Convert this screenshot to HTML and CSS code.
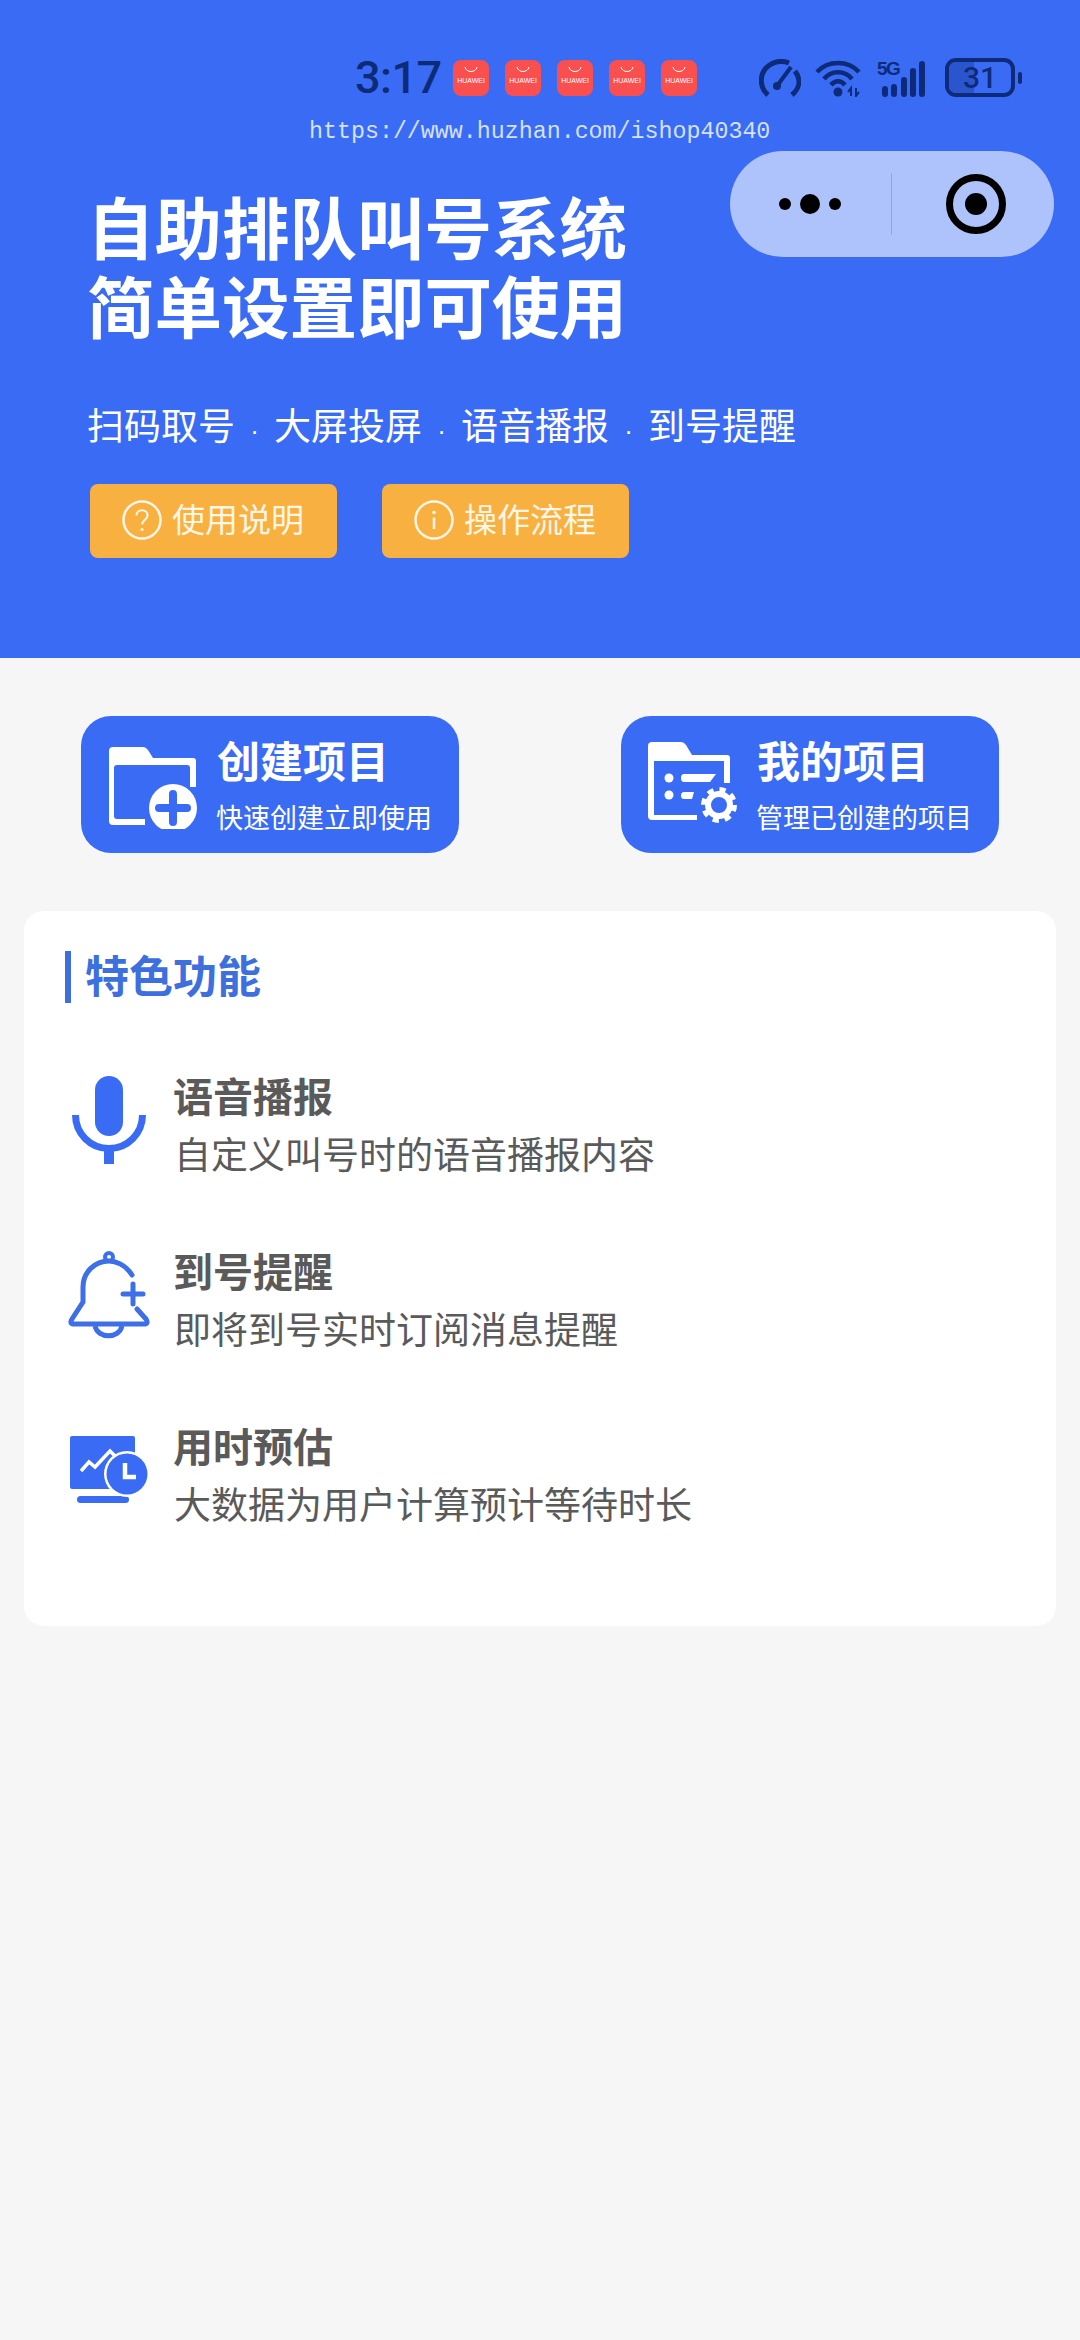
FILE: index.html
```html
<!DOCTYPE html>
<html lang="zh-CN">
<head>
  <meta charset="UTF-8" />
  <meta name="viewport" content="width=device-width, initial-scale=1.0"/>
  <title>自助排队叫号系统</title>
  <link rel="stylesheet" href="styles.css">
</head>
<body>

    <div class="hero">
        <div class="status">
            <span class="time">3:17</span>
            <div class="tiles">
                <div class="tile"><svg width="14" height="7" viewBox="0 0 14 7"><path d="M1 1c1 6 11 6 12 0" fill="none" stroke="#fff" stroke-width="1"/></svg><span>HUAWEI</span></div>
                <div class="tile"><svg width="14" height="7" viewBox="0 0 14 7"><path d="M1 1c1 6 11 6 12 0" fill="none" stroke="#fff" stroke-width="1"/></svg><span>HUAWEI</span></div>
                <div class="tile"><svg width="14" height="7" viewBox="0 0 14 7"><path d="M1 1c1 6 11 6 12 0" fill="none" stroke="#fff" stroke-width="1"/></svg><span>HUAWEI</span></div>
                <div class="tile"><svg width="14" height="7" viewBox="0 0 14 7"><path d="M1 1c1 6 11 6 12 0" fill="none" stroke="#fff" stroke-width="1"/></svg><span>HUAWEI</span></div>
                <div class="tile"><svg width="14" height="7" viewBox="0 0 14 7"><path d="M1 1c1 6 11 6 12 0" fill="none" stroke="#fff" stroke-width="1"/></svg><span>HUAWEI</span></div>
            </div>
            <div class="sys">
                <svg class="gauge" width="42" height="38" viewBox="0 0 42 38">
                    <path d="M9 36C1 29 0 17 7 9 14 2 23 1 30 4" fill="none" stroke="#0d2b78" stroke-width="5"/>
                    <path d="M36 12C42 20 41 29 33 36" fill="none" stroke="#0d2b78" stroke-width="5"/>
                    <path d="M18 27L32 8" fill="none" stroke="#0d2b78" stroke-width="4"/>
                    <circle cx="18" cy="27" r="4" fill="#0d2b78"/>
                </svg>
                <svg class="wifi" width="48" height="38" viewBox="0 0 48 38">
                    <path d="M2 13C13 1 33 1 44 13" fill="none" stroke="#0d2b78" stroke-width="4.5"/>
                    <path d="M9 20C16 11 30 11 37 20" fill="none" stroke="#0d2b78" stroke-width="4.5"/>
                    <path d="M16 26C20 21 26 21 30 26" fill="none" stroke="#0d2b78" stroke-width="4.5"/>
                    <circle cx="23" cy="33" r="4.5" fill="#0d2b78"/>
                    <path d="M36 37V29l-3 4M41 29v8l3-4" fill="none" stroke="#0d2b78" stroke-width="2"/>
                </svg>
                <div class="signal">
                    <span class="five-g">5G</span>
                    <svg width="44" height="37" viewBox="0 0 44 37">
                        <rect x="1" y="26" width="6" height="11" rx="3" fill="#0d2b78"/>
                        <rect x="10" y="24" width="6" height="13" rx="3" fill="#0d2b78"/>
                        <rect x="20" y="17" width="6" height="20" rx="3" fill="#0d2b78"/>
                        <rect x="29" y="8" width="6" height="29" rx="3" fill="#0d2b78"/>
                        <rect x="38" y="1" width="6" height="36" rx="3" fill="#0d2b78"/>
                    </svg>
                </div>
                <div class="battery"><div class="battery-body"><span class="battery-fill"></span><span class="battery-num">31</span></div><span class="battery-nub"></span></div>
            </div>
        </div>

        <div class="watermark">https://www.huzhan.com/ishop40340</div>

        <div class="capsule">
            <div class="capsule-more"><i class="dot"></i><i class="dot dot-big"></i><i class="dot"></i></div>
            <div class="capsule-line"></div>
            <svg class="capsule-target" width="62" height="62" viewBox="0 0 62 62">
                <circle cx="31" cy="31" r="26.5" fill="none" stroke="#000" stroke-width="7"/>
                <circle cx="31" cy="31" r="11" fill="#000"/>
            </svg>
        </div>

        <h1>自助排队叫号系统<br>简单设置即可使用</h1>
        <p class="tags">扫码取号<span class="sep">·</span>大屏投屏<span class="sep">·</span>语音播报<span class="sep">·</span>到号提醒</p>
        <div class="links">
            <a class="link-btn">
                <svg width="40" height="40" viewBox="0 0 40 40">
                    <circle cx="20" cy="20" r="18.5" fill="none" stroke="#fff6e6" stroke-width="2.5"/>
                    <path d="M14.5 15.5c0-7 11-7 11 0 0 4.500-5.500 4.500-5.500 9" fill="none" stroke="#fff6e6" stroke-width="2.200"/>
                    <circle cx="20" cy="29.500" r="1.600" fill="#fff6e6"/>
                </svg>
                <span class="link-text">使用说明</span>
            </a>
            <a class="link-btn">
                <svg width="40" height="40" viewBox="0 0 40 40">
                    <circle cx="20" cy="20" r="18.5" fill="none" stroke="#fff6e6" stroke-width="2.5"/>
                    <circle cx="20" cy="12.500" r="1.800" fill="#fff6e6"/>
                    <path d="M20 17.500V29" fill="none" stroke="#fff6e6" stroke-width="2.500"/>
                </svg>
                <span class="link-text">操作流程</span>
            </a>
        </div>
    </div>

    <div class="actions">
        <a class="action">
            <svg class="action-icon" width="88" height="82" viewBox="0 0 88 82">
                <path fill="#fff" fill-rule="evenodd" d="M4 0H34Q37 0 39 3L44 11H84Q87 11 87 14V78H4Q0 78 0 74V4Q0 0 4 0ZM8 18Q5 18 5 21V69Q5 72 8 72H81V21Q81 18 78 18Z"/>
                <rect x="36" y="36" width="52" height="46" fill="#396bf5"/>
                <path d="M81 18V40H87V14Z" fill="#fff"/>
                <circle cx="64" cy="61" r="24" fill="#fff"/>
                <path d="M64 47V75M50 61H78" fill="none" stroke="#396bf5" stroke-width="8" stroke-linecap="round"/>
            </svg>
            <div>
                <div class="action-title">创建项目</div>
                <div class="action-sub">快速创建立即使用</div>
            </div>
        </a>
        <a class="action">
            <svg class="action-icon action-icon-2" width="89" height="83" viewBox="0 0 89 83">
                <path fill="#fff" d="M4 0H33Q36 0 38 3L44 13H79Q82 13 82 16V41H76V19H6V73H49V78H4Q0 78 0 74V4Q0 0 4 0Z"/>
                <circle cx="21" cy="36" r="4.500" fill="#fff"/>
                <circle cx="21" cy="53" r="4.500" fill="#fff"/>
                <path d="M36 32H68L62 40H36Q33 40 33 36T36 32ZM36 50H46L44 57H36Q33 57 33 53.500T36 50Z" fill="#fff"/>
                <circle cx="71" cy="63" r="11" fill="none" stroke="#fff" stroke-width="6"/>
                <circle cx="71" cy="63" r="15" fill="none" stroke="#fff" stroke-width="6" stroke-dasharray="6 5.780"/>
            </svg>
            <div>
                <div class="action-title">我的项目</div>
                <div class="action-sub">管理已创建的项目</div>
            </div>
        </a>
    </div>

    <div class="panel">
        <h2 class="panel-title">特色功能</h2>

        <div class="feature">
            <div class="feature-icon">
                <svg class="icon-mic" width="74" height="88" viewBox="0 0 74 88">
                    <rect x="23" y="0" width="28" height="60" rx="14" fill="#396bf5"/>
                    <path d="M3.500 39A33.500 33.500 0 0 0 70.500 39" fill="none" stroke="#396bf5" stroke-width="7"/>
                    <rect x="32" y="74" width="10" height="14" fill="#396bf5"/>
                </svg>
            </div>
            <div>
                <div class="feature-title">语音播报</div>
                <div class="feature-desc">自定义叫号时的语音播报内容</div>
            </div>
        </div>

        <div class="feature">
            <div class="feature-icon">
                <svg class="icon-bell" width="82" height="88" viewBox="0 0 82 88">
                    <circle cx="41" cy="6" r="4" fill="none" stroke="#3d6fe8" stroke-width="4"/>
                    <path d="M64 24C57 13 47 10 41 10 27 10 15 21 15 36V51L4 68Q1 73 6 73H76Q81 73 78 68L69 58" fill="none" stroke="#3d6fe8" stroke-width="5" stroke-linecap="round"/>
                    <path d="M27 75C30 88 51 88 54 75" fill="none" stroke="#3d6fe8" stroke-width="5"/>
                    <path d="M65 33V53M55 43H75" fill="none" stroke="#3d6fe8" stroke-width="5" stroke-linecap="round"/>
                </svg>
            </div>
            <div>
                <div class="feature-title">到号提醒</div>
                <div class="feature-desc">即将到号实时订阅消息提醒</div>
            </div>
        </div>

        <div class="feature">
            <div class="feature-icon">
                <svg class="icon-clock" width="78" height="68" viewBox="0 0 78 68">
                    <rect x="0" y="0" width="65" height="53" rx="2" fill="#396bf5"/>
                    <rect x="7" y="60" width="52" height="7" rx="3.500" fill="#396bf5"/>
                    <path d="M11 35L19 26L25 31L40 15L45 20" fill="none" stroke="#fff" stroke-width="3.500"/>
                    <circle cx="57" cy="38" r="23" fill="#fff"/>
                    <circle cx="57" cy="38" r="20.500" fill="#396bf5"/>
                    <path d="M55 27V41H66" fill="none" stroke="#fff" stroke-width="4.500"/>
                </svg>
            </div>
            <div>
                <div class="feature-title">用时预估</div>
                <div class="feature-desc">大数据为用户计算预计等待时长</div>
            </div>
        </div>
    </div>

</body>
</html>
```

FILE: styles.css
```css
body
{
  margin: 0;
  padding: 0;
  width: 1080px;
  height: 2340px;
  overflow: hidden;
  background: #f6f6f6;
  font-family: "Noto Sans CJK SC", "Noto Sans", sans-serif;
}

.hero
{
  position: relative;
  box-sizing: border-box;
  height: 658px;
  padding: 58px 0 0 90px;
  background: #396bf5;
  color: #fff;
}

/* status bar */
.status
{
  display: flex;
  align-items: center;
  height: 40px;
  margin-left: 265px;
  margin-right: 58px;
}

.time
{
  width: 98px;
  font-family: Roboto, sans-serif;
  font-size: 45px;
  font-weight: 500;
  line-height: 40px;
  letter-spacing: -0.5px;
  color: #0d2b78;
}

.tiles
{
  display: flex;
  gap: 16px;
}

.tile
{
  display: flex;
  flex-direction: column;
  align-items: center;
  width: 36px;
  height: 36px;
  padding-top: 6px;
  box-sizing: border-box;
  border-radius: 8px;
  background: #f9504f;
}

.tile span
{
  width: 36px;
  margin-top: 3px;
  font-family: "Liberation Sans", sans-serif;
  font-size: 7px;
  line-height: 9px;
  text-align: center;
  color: #fff;
}

.sys
{
  display: flex;
  align-items: flex-end;
  height: 38px;
  margin-left: auto;
}

.wifi
{
  margin-left: 14px;
}

.signal
{
  position: relative;
  width: 53px;
  height: 37px;
  margin-left: 14px;
}

.signal svg
{
  position: absolute;
  right: 5px;
  bottom: 0;
}

.five-g
{
  position: absolute;
  left: 0;
  top: -1px;
  font-family: "Liberation Sans", sans-serif;
  font-size: 19px;
  font-weight: bold;
  line-height: 19px;
  letter-spacing: -1.5px;
  color: #0d2b78;
}

.battery
{
  display: flex;
  align-items: center;
  margin-left: 15px;
}

.battery-body
{
  position: relative;
  box-sizing: border-box;
  width: 70px;
  height: 39px;
  border: 4px solid #0d2b78;
  border-radius: 11px;
  overflow: hidden;
  text-align: center;
}

.battery-fill
{
  position: absolute;
  left: 0;
  top: 0;
  width: 25px;
  height: 100%;
  background: #2a55cc;
}

.battery-num
{
  position: relative;
  font-family: Roboto, sans-serif;
  font-size: 30px;
  font-weight: 500;
  line-height: 31px;
  color: #0d2b78;
}

.battery-nub
{
  width: 4px;
  height: 12px;
  margin-left: 3px;
  border-radius: 2px;
  background: #0d2b78;
}

/* overlays on the hero */
.watermark
{
  position: absolute;
  left: 309px;
  top: 119px;
  font-family: "Liberation Mono", monospace;
  font-size: 23.300px;
  line-height: 26px;
  white-space: nowrap;
  color: #d5e0fb;
}

.capsule
{
  position: absolute;
  left: 730px;
  top: 151px;
  display: flex;
  align-items: center;
  width: 324px;
  height: 106px;
  border-radius: 53px;
  background: #aec2fb;
}

.capsule-more
{
  display: flex;
  align-items: center;
  gap: 9px;
  margin-left: 49px;
}

.dot
{
  width: 12px;
  height: 12px;
  border-radius: 50%;
  background: #000;
}

.dot-big
{
  width: 20px;
  height: 20px;
}

.capsule-line
{
  width: 1px;
  height: 62px;
  margin-left: 50px;
  background: #8ea5e6;
}

.capsule-target
{
  margin-left: 53px;
}

/* hero text */
h1
{
  margin: 87px 0 0 -3px;
  font-size: 67.500px;
  font-weight: 700;
  line-height: 79px;
}

.tags
{
  height: 50px;
  margin: 56px 0 0 -3px;
  font-size: 37px;
  line-height: 50px;
  white-space: nowrap;
}

.sep
{
  display: inline-block;
  width: 39px;
  font-family: "Liberation Sans", sans-serif;
  font-size: 26px;
  text-align: center;
}

.links
{
  display: flex;
  gap: 45px;
  margin-top: 35px;
}

.link-btn
{
  display: flex;
  align-items: center;
  gap: 10px;
  box-sizing: border-box;
  width: 247px;
  height: 74px;
  padding: 0 0 2px 32px;
  border-radius: 8px;
  background: #f8b040;
  font-size: 33px;
  color: #fff6e6;
}

.link-text
{
  padding-bottom: 5px;
}

/* two action cards */
.actions
{
  display: flex;
  justify-content: space-between;
  margin: 58px 81px 0;
}

.action
{
  display: flex;
  box-sizing: border-box;
  width: 378px;
  height: 137px;
  border-radius: 30px;
  background: #396bf5;
  color: #fff;
}

.action-icon
{
  flex: none;
  margin: 31px 20px 0 28px;
}

.action-icon-2
{
  margin: 26px 20px 0 27px;
}

.action-title
{
  margin-top: 14px;
  font-size: 43px;
  font-weight: 700;
  line-height: 58px;
}

.action-sub
{
  margin: 11px 0 0 -1px;
  font-size: 27px;
  line-height: 36px;
  white-space: nowrap;
}

/* features */
.panel
{
  box-sizing: border-box;
  height: 715px;
  margin: 58px 24px 0;
  padding: 40px 0 0 41px;
  border-radius: 20px;
  background: #fff;
}

.panel-title
{
  margin: 0 0 65px;
  padding: 0 0 6px 14px;
  border-left: 6px solid #3d6fdf;
  font-size: 44px;
  font-weight: 700;
  line-height: 46px;
  color: #3d6fdf;
}

.feature
{
  display: flex;
  margin-bottom: 59px;
}

.feature-icon
{
  flex: none;
  width: 109px;
}

.icon-mic
{
  margin: 8px 0 0 7px;
}

.icon-bell
{
  margin: 8px 0 0 3px;
}

.icon-clock
{
  margin: 18px 0 0 5px;
}

.feature-title
{
  margin-left: -1px;
  font-size: 40px;
  font-weight: 700;
  line-height: 54px;
  color: #5a5a5a;
}

.feature-desc
{
  font-size: 37px;
  line-height: 62px;
  color: #5a5a5a;
}
```
